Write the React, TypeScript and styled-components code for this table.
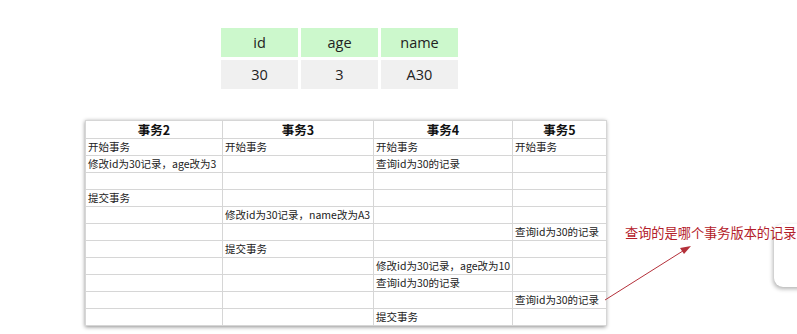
import styled, { createGlobalStyle } from "styled-components";

const GlobalStyle = createGlobalStyle`
  html, body {
    margin: 0;
    padding: 0;
    background: #ffffff;
    overflow: hidden;
  }
`;

const Page = styled.div`
  position: relative;
  width: 797px;
  height: 334px;
  background: #ffffff;
  font-family: "Noto Sans CJK SC", "Noto Sans", sans-serif;
`;

const Content = styled.div`
  display: flex;
  flex-direction: column;
  padding-top: 28px;
`;

const RecordGrid = styled.div`
  display: grid;
  grid-template-columns: repeat(3, 77px);
  grid-auto-rows: 29px;
  column-gap: 3px;
  row-gap: 3px;
  margin-left: 221px;
`;

const RecordCell = styled.div<{ $head?: boolean }>`
  display: flex;
  align-items: center;
  justify-content: center;
  background: ${(p) => (p.$head ? "#ccf8cc" : "#f0f0f0")};
  font-family: "Open Sans", "Noto Sans", sans-serif;
  font-size: 14.5px;
  color: #222;
`;

const TableWrap = styled.div`
  margin-top: 31px;
  margin-left: 85px;
  width: 521px;
  box-shadow: 0 1px 4px rgba(0, 0, 0, 0.45);
`;

const Table = styled.table`
  border-collapse: collapse;
  table-layout: fixed;
  width: 521px;
  background: #fff;
`;

const Th = styled.th`
  height: 17px;
  padding: 0;
  border: 1px solid #d6d6d6;
  font-family: "Noto Sans CJK SC", sans-serif;
  font-size: 12.5px;
  font-weight: 700;
  line-height: 16px;
  color: #111;
  text-align: center;
`;

const Td = styled.td`
  height: 16px;
  padding: 0 0 0 2px;
  border: 1px solid #d6d6d6;
  font-family: "Noto Sans CJK SC", sans-serif;
  font-size: 10.5px;
  line-height: 16px;
  color: #222;
  white-space: nowrap;
  overflow: hidden;
`;

const SideCard = styled.div`
  position: absolute;
  left: 774px;
  top: 224px;
  width: 60px;
  height: 63px;
  border-radius: 9px;
  background: #fff;
  box-shadow: -1px 2px 4px rgba(0, 0, 0, 0.3);
`;

const Note = styled.div`
  position: absolute;
  left: 625px;
  top: 224px;
  font-family: "Noto Sans CJK SC", sans-serif;
  font-size: 13.2px;
  line-height: 18px;
  color: #b4202a;
  white-space: nowrap;
`;

const Arrow = styled.svg`
  position: absolute;
  left: 600px;
  top: 240px;
`;

const record = {
  head: ["id", "age", "name"],
  row: ["30", "3", "A30"],
};

const heads = ["事务2", "事务3", "事务4", "事务5"];
const widths = [137, 151, 139, 94];

const rows: string[][] = [
  ["开始事务", "开始事务", "开始事务", "开始事务"],
  ["修改id为30记录，age改为3", "", "查询id为30的记录", ""],
  ["", "", "", ""],
  ["提交事务", "", "", ""],
  ["", "修改id为30记录，name改为A3", "", ""],
  ["", "", "", "查询id为30的记录"],
  ["", "提交事务", "", ""],
  ["", "", "修改id为30记录，age改为10", ""],
  ["", "", "查询id为30的记录", ""],
  ["", "", "", "查询id为30的记录"],
  ["", "", "提交事务", ""],
];

export default function App() {
  return (
    <Page>
      <GlobalStyle />
      <Content>
        <RecordGrid>
          {record.head.map((h) => (
            <RecordCell key={h} $head>
              {h}
            </RecordCell>
          ))}
          {record.row.map((v) => (
            <RecordCell key={v}>{v}</RecordCell>
          ))}
        </RecordGrid>
        <TableWrap>
          <Table>
            <colgroup>
              {widths.map((w, i) => (
                <col key={i} style={{ width: w }} />
              ))}
            </colgroup>
            <thead>
              <tr>
                {heads.map((h) => (
                  <Th key={h}>{h}</Th>
                ))}
              </tr>
            </thead>
            <tbody>
              {rows.map((r, i) => (
                <tr key={i}>
                  {r.map((c, j) => (
                    <Td key={j}>{c}</Td>
                  ))}
                </tr>
              ))}
            </tbody>
          </Table>
        </TableWrap>
      </Content>
      <SideCard />
      <Note>查询的是哪个事务版本的记录</Note>
      <Arrow width="100" height="70" viewBox="0 0 100 70">
        <line x1="5" y1="60" x2="86" y2="9" stroke="#b4303a" strokeWidth="1" />
        <polygon points="91,6 80,8 84,14" fill="#b4303a" />
      </Arrow>
    </Page>
  );
}
